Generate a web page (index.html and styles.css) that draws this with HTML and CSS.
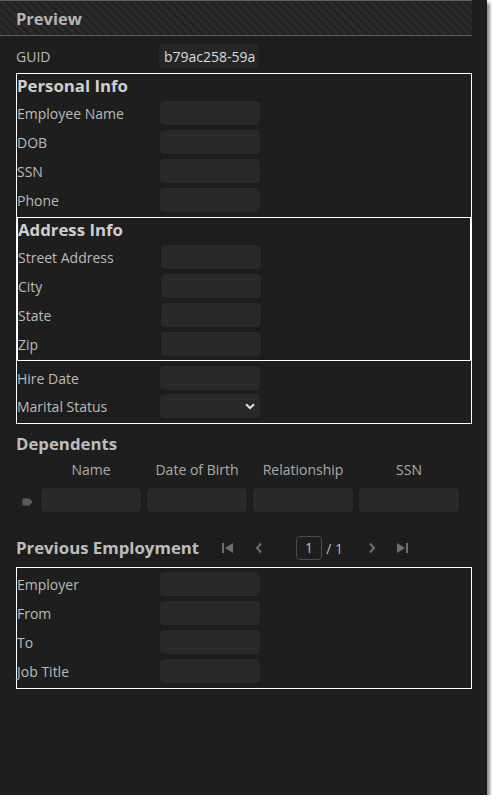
FILE: index.html
```html
<!DOCTYPE html>
<html>
<head>
<meta charset="utf-8">
<link rel="stylesheet" href="styles.css">
</head>
<body>
<div class="window">
  <div class="panel">
    <div class="header">Preview</div>
    <div class="body">
      <div class="row">
        <span class="label">GUID</span>
        <div class="input guid"><span>b79ac258-59a</span></div>
      </div>

      <div class="box outer">
        <div class="heading">Personal Info</div>
        <div class="rows">
          <div class="row"><span class="label">Employee Name</span><div class="input"></div></div>
          <div class="row"><span class="label">DOB</span><div class="input"></div></div>
          <div class="row"><span class="label">SSN</span><div class="input"></div></div>
          <div class="row"><span class="label">Phone</span><div class="input"></div></div>
        </div>
        <div class="box address">
          <div class="heading">Address Info</div>
          <div class="rows">
            <div class="row"><span class="label">Street Address</span><div class="input"></div></div>
            <div class="row"><span class="label">City</span><div class="input"></div></div>
            <div class="row"><span class="label">State</span><div class="input"></div></div>
            <div class="row"><span class="label">Zip</span><div class="input"></div></div>
          </div>
        </div>
        <div class="rows tail">
          <div class="row"><span class="label">Hire Date</span><div class="input"></div></div>
          <div class="row"><span class="label">Marital Status</span>
            <div class="input select">
              <svg width="10" height="7" viewBox="0 0 10 7"><path d="M1 1.2 L5 5 L9 1.2" fill="none" stroke="#e0e0e0" stroke-width="2"/></svg>
            </div>
          </div>
        </div>
      </div>

      <div class="section-title dep-title">Dependents</div>
      <div class="grid">
        <div class="gh"></div>
        <div class="gh">Name</div>
        <div class="gh">Date of Birth</div>
        <div class="gh">Relationship</div>
        <div class="gh">SSN</div>
        <div class="indicator"><svg width="11" height="8" viewBox="0 0 11 8"><path d="M1.5 0.5 H7.5 L10.5 4 L7.5 7.5 H1.5 A1 1 0 0 1 0.5 6.5 V1.5 A1 1 0 0 1 1.5 0.5 Z" fill="#5a5a5a"/></svg></div>
        <div class="input"></div>
        <div class="input"></div>
        <div class="input"></div>
        <div class="input"></div>
      </div>

      <div class="emp-head">
        <div class="section-title">Previous Employment</div>
        <div class="pager">
          <svg class="pg first" width="14" height="14" viewBox="0 0 14 14"><rect x="1" y="2" width="2" height="10" fill="#6e6e6e"/><path d="M12 2 V12 L4 7 Z" fill="#6e6e6e"/></svg>
          <svg class="pg prev" width="10" height="14" viewBox="0 0 10 14"><path d="M7 2.5 L3 7 L7 11.5" fill="none" stroke="#6e6e6e" stroke-width="2"/></svg>
          <div class="page-box">1</div>
          <span class="page-of">/ 1</span>
          <svg class="pg next" width="10" height="14" viewBox="0 0 10 14"><path d="M3 2.5 L7 7 L3 11.5" fill="none" stroke="#6e6e6e" stroke-width="2"/></svg>
          <svg class="pg last" width="14" height="14" viewBox="0 0 14 14"><path d="M2 2 V12 L10 7 Z" fill="#6e6e6e"/><rect x="11" y="2" width="2" height="10" fill="#6e6e6e"/></svg>
        </div>
      </div>

      <div class="box emp">
        <div class="rows">
          <div class="row"><span class="label">Employer</span><div class="input"></div></div>
          <div class="row"><span class="label">From</span><div class="input"></div></div>
          <div class="row"><span class="label">To</span><div class="input"></div></div>
          <div class="row"><span class="label">Job Title</span><div class="input"></div></div>
        </div>
      </div>
    </div>
  </div>
</div>
</body>
</html>
```

FILE: styles.css
```css
html, body {
  margin: 0;
  padding: 0;
  background: #ffffff;
}
body {
  font-family: "Open Sans", "Noto Sans", sans-serif;
  font-size: 14px;
  color: #bababa;
}
.window {
  width: 487px;
  height: 795px;
  background: #1e1e1e;
  box-shadow: 3px 3px 3px rgba(0,0,0,0.45);
}
.panel {
  width: 472px;
}
.header {
  height: 34px;
  border-top: 1px solid #5e5e5e;
  border-bottom: 1px solid #5e5e5e;
  background: repeating-linear-gradient(45deg, #2b2b2b 0px, #2b2b2b 3px, #222222 3px, #222222 5.8px);
  box-sizing: content-box;
  padding-left: 16px;
  font-weight: 700;
  font-size: 16.5px;
  line-height: 35px;
  color: #b4b4b4;
}
.body {
  padding: 8px 0 0 16px;
}
.row {
  display: flex;
  align-items: center;
  height: 24px;
}
.label {
  width: 143px;
  flex: none;
  white-space: nowrap;
  line-height: 24px;
  padding-top: 2px;
}
.input {
  width: 100px;
  height: 24px;
  flex: none;
  background: #292929;
  border-radius: 4px;
  box-shadow: 0 0 2px #161616;
  box-sizing: border-box;
}
.guid {
  background: #262626;
  overflow: hidden;
  white-space: nowrap;
  padding-left: 5px;
  color: #dcdcdc;
  line-height: 26px;
}
.box {
  border: 1px solid #ffffff;
}
.outer {
  margin-top: 5px;
  padding-bottom: 5px;
}
.heading {
  font-weight: 700;
  font-size: 16.8px;
  line-height: 24px;
  height: 22px;
  color: #cfcfcf;
}
.rows {
  display: flex;
  flex-direction: column;
  gap: 5px;
  margin-top: 5px;
}
.address {
  margin-top: 5px;
  padding-bottom: 4px;
}
.tail {
  margin-top: 5px;
  gap: 4px;
}
.select {
  display: flex;
  align-items: center;
  justify-content: flex-end;
  padding-right: 5px;
}
.section-title {
  font-weight: 700;
  font-size: 16.8px;
  line-height: 22px;
  color: #bdbdbd;
  white-space: nowrap;
}
.dep-title {
  margin-top: 9px;
}
.grid {
  display: grid;
  grid-template-columns: 19px 100px 100px 100px 100px;
  column-gap: 6px;
  row-gap: 0;
  align-items: center;
  margin-top: 3px;
}
.gh {
  text-align: center;
  color: #ababab;
  line-height: 24px;
  height: 24px;
  margin-bottom: 6px;
  white-space: nowrap;
}
.indicator {
  display: flex;
  align-items: center;
  padding-left: 6px;
  padding-top: 3px;
}
.grid .input {
  width: 100px;
}
.emp-head {
  display: flex;
  align-items: center;
  margin-top: 24px;
  height: 24px;
}
.pager {
  display: flex;
  align-items: center;
  margin-left: 22px;
}
.pg {
  display: block;
  flex: none;
}
.prev {
  margin-left: 19px;
}
.page-box {
  margin-left: 32px;
  width: 26px;
  height: 24px;
  box-sizing: border-box;
  border: 1px solid #4c4c4c;
  border-radius: 4px;
  text-align: center;
  line-height: 22px;
  color: #bdbdbd;
}
.page-of {
  margin-left: 4px;
  color: #bdbdbd;
}
.next {
  margin-left: 24px;
}
.last {
  margin-left: 18px;
}
.emp {
  margin-top: 7px;
  padding-bottom: 5px;
}
.emp .rows {
  margin-top: 4px;
}
```
